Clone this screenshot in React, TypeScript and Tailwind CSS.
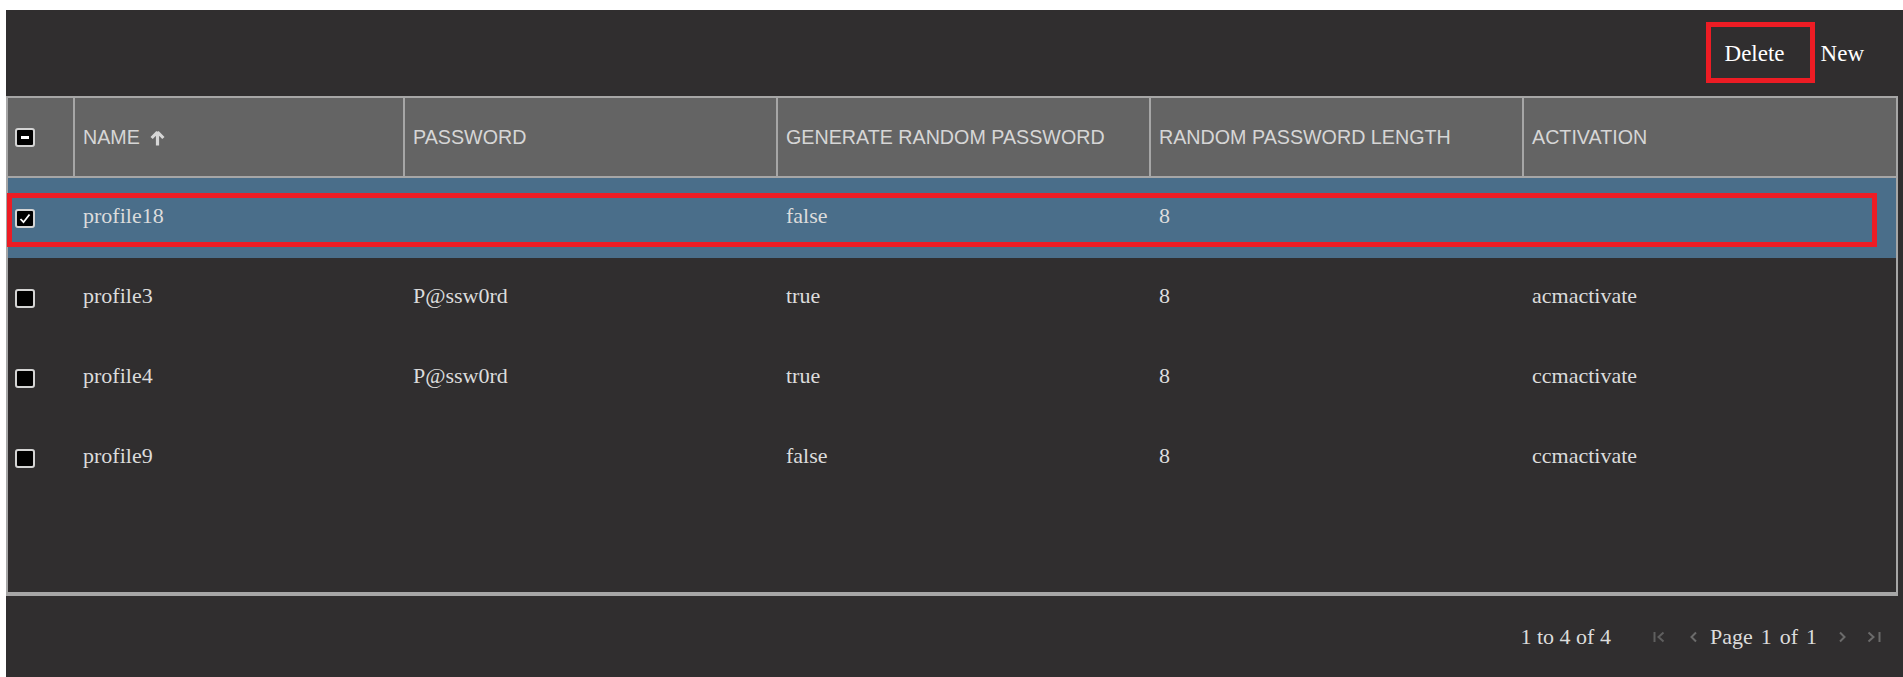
import React from "react";

const serif = { fontFamily: '"Liberation Serif", "Times New Roman", serif' };
const sans = { fontFamily: '"Liberation Sans", Arial, sans-serif' };

const colW = ["w-[67px]", "w-[330px]", "w-[373px]", "w-[373px]", "w-[373px]", "w-[372px]"];

function Box({ state }: { state: "none" | "checked" | "indeterminate" }) {
  return (
    <div className="ml-[7px] w-[20px] h-[19px] bg-black border-2 border-[#d4d4d4] rounded-[3px] flex items-center justify-center">
      {state === "indeterminate" && <div className="w-[8px] h-[3px] bg-white" />}
      {state === "checked" && (
        <svg width="12" height="11" viewBox="0 0 12 11">
          <path d="M1.5 6 L4.5 9.2 L10.5 1.5" fill="none" stroke="#ffffff" strokeWidth="1.8" />
        </svg>
      )}
    </div>
  );
}

const rows = [
  { name: "profile18", pw: "", gen: "false", len: "8", act: "", sel: true },
  { name: "profile3", pw: "P@ssw0rd", gen: "true", len: "8", act: "acmactivate", sel: false },
  { name: "profile4", pw: "P@ssw0rd", gen: "true", len: "8", act: "ccmactivate", sel: false },
  { name: "profile9", pw: "", gen: "false", len: "8", act: "ccmactivate", sel: false },
];

const headers = ["NAME", "PASSWORD", "GENERATE RANDOM PASSWORD", "RANDOM PASSWORD LENGTH", "ACTIVATION"];

function Chev({ dir }: { dir: "l" | "r" }) {
  return (
    <svg width="7" height="12" viewBox="0 0 7 12">
      <path d={dir === "l" ? "M6 1.5 L1.5 6 L6 10.5" : "M1 1.5 L5.5 6 L1 10.5"} fill="none" stroke="#6b6b6b" strokeWidth="2" />
    </svg>
  );
}

export default function App() {
  return (
    <div className="min-h-screen bg-white pl-[6px] pt-[10px]">
      <div className="bg-[#302e2f] w-[1897px] h-[667px] flex flex-col">
        {/* toolbar */}
        <div className="h-[86px] flex items-center justify-end pr-[21px] text-[23px] text-white" style={serif}>
          <div className="relative px-[18px] h-[40px] flex items-center pt-[2px]">
            <span>Delete</span>
            <div className="absolute left-[-1px] top-[-11px] w-[109px] h-[61px] border-[5px] border-[#ed1c24]" />
          </div>
          <div className="px-[18px] h-[40px] flex items-center pt-[2px]">
            <span>New</span>
          </div>
        </div>

        {/* grid */}
        <div className="w-[1892px] h-[500px] border-2 border-b-4 border-[#a6a6a6] flex flex-col">
          <div className="h-[80px] bg-[#646464] border-b-2 border-[#a6a6a6] flex text-[19.7px] text-[#d6d6d6]" style={sans}>
            <div className={`${colW[0]} border-r-2 border-[#a6a6a6] flex items-center`}>
              <Box state="indeterminate" />
            </div>
            {headers.map((h, i) => (
              <div
                key={h}
                className={`${colW[i + 1]} ${i < 4 ? "border-r-2 border-[#a6a6a6]" : ""} flex items-center pl-[8px] pt-[1px]`}
              >
                <span>{h}</span>
                {i === 0 && (
                  <svg className="ml-[10px]" width="15" height="16" viewBox="0 0 15 16">
                    <path d="M7.5 2 L1.6 8 M7.5 2 L13.4 8 M7.5 1.5 V15.5" fill="none" stroke="#d6d6d6" strokeWidth="3.2" />
                  </svg>
                )}
              </div>
            ))}
          </div>
          <div className="flex-1 flex flex-col text-[22px] text-[#dcdcdc]" style={serif}>
            {rows.map((r) => (
              <div key={r.name} className={`relative h-[80px] flex items-center ${r.sel ? "bg-[#4a6e8a]" : ""}`}>
                <div className={`${colW[0]} flex items-center`}>
                  <Box state={r.sel ? "checked" : "none"} />
                </div>
                {[r.name, r.pw, r.gen, r.len, r.act].map((v, i) => (
                  <div key={i} className={`${colW[i + 1]} pl-[8px] mb-[5px]`}>
                    {v}
                  </div>
                ))}
                {r.sel && (
                  <div className="absolute left-[-1px] top-[15px] w-[1870px] h-[54px] border-[5px] border-[#ed1c24]" />
                )}
              </div>
            ))}
          </div>
        </div>

        {/* footer */}
        <div className="flex-1 flex items-center justify-end pr-[22px] text-[22px] text-[#dcdcdc]" style={serif}>
          <span>1 to 4 of 4</span>
          <svg className="ml-[42px]" width="12" height="12" viewBox="0 0 12 12">
            <path d="M1.5 1 V11" stroke="#5f5f5f" strokeWidth="2" />
            <path d="M10.5 1.5 L5.5 6 L10.5 10.5" fill="none" stroke="#5f5f5f" strokeWidth="2" />
          </svg>
          <span className="ml-[25px] flex"><Chev dir="l" /></span>
          <span className="ml-[13px] flex">
            <span>Page</span>
            <span className="ml-[8px]">1</span>
            <span className="ml-[8px]">of</span>
            <span className="ml-[8px]">1</span>
          </span>
          <span className="ml-[22px] flex"><Chev dir="r" /></span>
          <svg className="ml-[21px]" width="14" height="12" viewBox="0 0 14 12">
            <path d="M1.5 1.5 L6.5 6 L1.5 10.5" fill="none" stroke="#6b6b6b" strokeWidth="2" />
            <path d="M12.5 1 V11" stroke="#6b6b6b" strokeWidth="2" />
          </svg>
        </div>
      </div>
    </div>
  );
}
